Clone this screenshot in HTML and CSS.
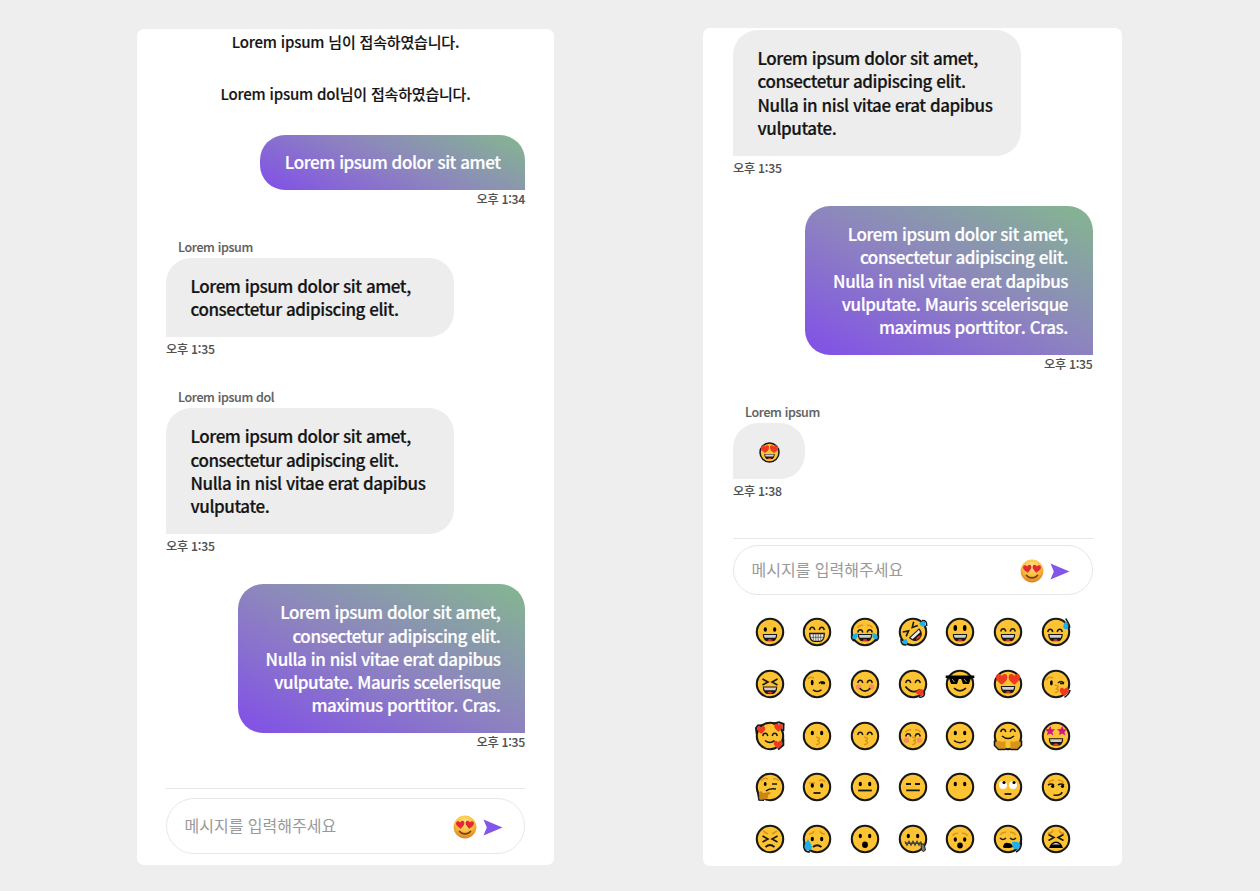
FILE: index.html
```html
<!DOCTYPE html>
<html lang="ko">
<head>
<meta charset="utf-8">
<title>Chat</title>
<link rel="stylesheet" href="styles.css">
</head>
<body>
<svg class="defs" aria-hidden="true">
  <defs>
    <radialGradient id="gloss" cx=".5" cy=".3" r=".75"><stop offset="0" stop-color="#ffe680"/><stop offset=".55" stop-color="#f9bd3d"/><stop offset="1" stop-color="#d9741c"/></radialGradient>
  </defs>
  <symbol id="face" viewBox="-16 -16 32 32"><circle r="13.2" fill="#fdc332" stroke="#181818" stroke-width="2.1"/></symbol>
  <symbol id="heart" viewBox="-5 -5 10 10"><path d="M0 4.6C-3 2.4-4.8.6-4.8-1.6-4.8-4.9-1.4-5.1 0-2.6 1.4-5.1 4.8-4.9 4.8-1.6 4.8.6 3 2.4 0 4.6Z" fill="#f03a20"/></symbol>
  <symbol id="grin" viewBox="-7.5 -4 15 8"><path d="M-7.3-3.5H7.3C7.3 0 5.5 3.9 2.5 3.9H-2.5C-5.5 3.9-7.3 0-7.3-3.5Z" fill="#181818"/><path d="M-6.2-2.6H6.2L5.3.2H-5.3Z" fill="#cfcfcf"/><path d="M-2.8 3C-1.5 1.2 1.5 1.2 2.8 3 1.5 3.5-1.5 3.5-2.8 3Z" fill="#ee3b23"/></symbol>
  <symbol id="arcs" viewBox="-9 -3 18 6"><path d="M-7.3 2C-6.5-1.7-3-1.7-2.2 2M2.2 2C3-1.7 6.5-1.7 7.3 2" fill="none" stroke="#181818" stroke-width="1.5"/></symbol>
  <symbol id="eyes" viewBox="-7 -3 14 6"><ellipse cx="-4.7" rx="1.6" ry="2.3"/><ellipse cx="4.7" rx="1.6" ry="2.3"/></symbol>
  <symbol id="brows" viewBox="-9 -3 18 6"><path d="M-7.5 1.8C-6-.5-4-1-2-.6M2-.6C4-1 6-.5 7.5 1.8" fill="none" stroke="#d9961c" stroke-width="1.6"/></symbol>
  <symbol id="kiss" viewBox="-3 -5 6 10"><path d="M-1.5-3.7C3-4 2.8-.5-.5-.3 3-.2 2.8 3.8-1.5 3.5" fill="none" stroke="#d9961c" stroke-width="1.5"/></symbol>
  <symbol id="blush" viewBox="-12 -3 24 6"><g fill="#f79060"><circle cx="-6.5" r="2.7"/><circle cx="6.5" r="2.7"/></g></symbol>
  <symbol id="squeeze" viewBox="-9 -4 18 8"><path d="M-7.5-3-2 0-7.5 3M7.5-3 2 0 7.5 3" fill="none" stroke="#181818" stroke-width="1.6"/></symbol>
  <symbol id="drop" viewBox="-4 -6 8 12"><path d="M0-6C1-3 4-1 4 2A4 4 0 0 1-4 2C-4-1-1-3 0-6Z" fill="#18b2ee"/></symbol>
  <symbol id="love" viewBox="-16 -16 32 32"><use href="#face" x="-16" y="-16" width="32" height="32"/><use href="#heart" x="-12.3" y="-10.8" width="12" height="12"/><use href="#heart" x=".3" y="-10.8" width="12" height="12"/><use href="#grin" x="-7.5" y="1.5" width="15" height="8"/></symbol>
  <symbol id="glossy" viewBox="-12 -12 24 24"><circle r="11.4" fill="url(#gloss)"/><g fill="#e52735"><path transform="translate(-4.6 -2.3) rotate(-6)" d="M0 4C-2.4 2-4.2.7-4.2-1.4-4.2-4.2-1.3-4.4 0-2.2 1.3-4.4 4.2-4.2 4.2-1.4 4.2.7 2.4 2 0 4Z"/><path transform="translate(4.6 -2.3) rotate(6)" d="M0 4C-2.4 2-4.2.7-4.2-1.4-4.2-4.2-1.3-4.4 0-2.2 1.3-4.4 4.2-4.2 4.2-1.4 4.2.7 2.4 2 0 4Z"/></g><path d="M-5.6 4.3C-3 7.7 3 7.7 5.6 4.3" fill="none" stroke="#774014" stroke-width="1.6" stroke-linecap="round"/></symbol>
  <symbol id="send" viewBox="0 0 20 17"><path d="M.5.5 19.5 8.5.5 16.5 3.8 8.5Z" fill="#8256e6"/></symbol>
</svg>

<main class="stage">
  <section class="panel panel-chat">
    <p class="notice">Lorem ipsum 님이 접속하였습니다.</p>
    <p class="notice notice-second">Lorem ipsum dol님이 접속하였습니다.</p>
    <article class="message mine first">
      <div class="bubble">Lorem ipsum dolor sit amet</div>
      <time>오후 1:34</time>
    </article>
    <article class="message after-mine">
      <h2>Lorem ipsum</h2>
      <div class="bubble wide">Lorem ipsum dolor sit amet,<br>consectetur adipiscing elit.</div>
      <time>오후 1:35</time>
    </article>
    <article class="message">
      <h2>Lorem ipsum dol</h2>
      <div class="bubble wide tall">Lorem ipsum dolor sit amet,<br>consectetur adipiscing elit.<br>Nulla in nisl vitae erat dapibus<br>vulputate.</div>
      <time>오후 1:35</time>
    </article>
    <article class="message mine">
      <div class="bubble wide">Lorem ipsum dolor sit amet,<br>consectetur adipiscing elit.<br>Nulla in nisl vitae erat dapibus<br>vulputate. Mauris scelerisque<br>maximus porttitor. Cras.</div>
      <time>오후 1:35</time>
    </article>
    <footer class="composer">
      <div class="field"><span class="placeholder">메시지를 입력해주세요</span><svg class="emoji-button"><use href="#glossy"/></svg><svg class="send-button"><use href="#send"/></svg></div>
    </footer>
  </section>

  <section class="panel panel-emoji">
    <article class="message continued">
      <div class="bubble wide tall">Lorem ipsum dolor sit amet,<br>consectetur adipiscing elit.<br>Nulla in nisl vitae erat dapibus<br>vulputate.</div>
      <time>오후 1:35</time>
    </article>
    <article class="message mine">
      <div class="bubble wide">Lorem ipsum dolor sit amet,<br>consectetur adipiscing elit.<br>Nulla in nisl vitae erat dapibus<br>vulputate. Mauris scelerisque<br>maximus porttitor. Cras.</div>
      <time>오후 1:35</time>
    </article>
    <article class="message after-mine">
      <h2>Lorem ipsum</h2>
      <div class="bubble emoji-bubble"><svg class="inline-emoji"><use href="#love"/></svg></div>
      <time>오후 1:38</time>
    </article>
    <footer class="composer">
      <div class="field"><span class="placeholder">메시지를 입력해주세요</span><svg class="emoji-button"><use href="#glossy"/></svg><svg class="send-button"><use href="#send"/></svg></div>
    </footer>
    <div class="emoji-grid">
      <svg viewBox="-16 -16 32 32"><use href="#face" x="-16" y="-16" width="32" height="32"/><use href="#eyes" x="-7" y="-5.5" width="14" height="6"/><use href="#grin" x="-7.5" y="1.5" width="15" height="8"/></svg>
      <svg viewBox="-16 -16 32 32"><use href="#face" x="-16" y="-16" width="32" height="32"/><use href="#arcs" x="-9" y="-7" width="18" height="6"/><path d="M-7.3 1.5H7.3C7.3 6 5.5 9.3 2.5 9.3H-2.5C-5.5 9.3-7.3 6-7.3 1.5Z" fill="#eee" stroke="#181818" stroke-width="1.3"/><path d="M-6.5 5.3H6.5M-3.7 2V8.5M-1.2 2V9M1.2 2V9M3.7 2V8.5" stroke="#444" stroke-width=".7"/></svg>
      <svg viewBox="-16 -16 32 32"><use href="#face" x="-16" y="-16" width="32" height="32"/><use href="#brows" x="-9" y="-9" width="18" height="6"/><use href="#arcs" x="-9" y="-4.5" width="18" height="6"/><use href="#grin" x="-7.5" y="1.5" width="15" height="8"/><path d="M-7.5 1C-7 5-8 7-11 7-14.5 7-14 2-7.5 1ZM7.5 1C7 5 8 7 11 7 14.5 7 14 2 7.5 1Z" fill="#18b2ee"/><path d="M-13.3 3Q-14.3 8-10.5 9M13.3 3Q14.3 8 10.5 9" fill="none" stroke="#181818" stroke-width="1.6"/></svg>
      <svg viewBox="-16 -16 32 32"><use href="#face" x="-16" y="-16" width="32" height="32"/><g transform="rotate(-43)"><path d="M-7.5-7-2.5-3.8-8-1.5M7.5-7 2.5-3.8 8-1.5" fill="none" stroke="#181818" stroke-width="1.6"/><path d="M-7 1.5H7C7 6 5 9.5 0 9.5-5 9.5-7 6-7 1.5Z" fill="#181818"/><path d="M-5.8 2.5H5.8L5 5H-5Z" fill="#eee"/><path d="M-3.5 8Q0 5 3.5 8 0 9.5-3.5 8Z" fill="#ef3b21"/></g><path d="M6-8.5Q9-11.5 12-10 13.5-7 11-5.3 8-5 6-8.5ZM-6.5 7Q-4.5 11-7 12.7-10.5 13.5-11 11-10.5 7.5-6.5 7Z" fill="#18b2ee"/><path d="M9-11.5Q14.3-12 13.7-6M-12 7Q-12.5 13.5-6.5 13" fill="none" stroke="#181818" stroke-width="1.5"/></svg>
      <svg viewBox="-16 -16 32 32"><use href="#face" x="-16" y="-16" width="32" height="32"/><ellipse cx="-4.7" cy="-4" rx="1.8" ry="3"/><ellipse cx="4.7" cy="-4" rx="1.8" ry="3"/><use href="#grin" x="-7.5" y="1.5" width="15" height="8"/></svg>
      <svg viewBox="-16 -16 32 32"><use href="#face" x="-16" y="-16" width="32" height="32"/><use href="#arcs" x="-9" y="-5.5" width="18" height="6"/><use href="#grin" x="-7.5" y="1.5" width="15" height="8"/></svg>
      <svg viewBox="-16 -16 32 32"><use href="#face" x="-16" y="-16" width="32" height="32"/><use href="#arcs" x="-10" y="-5" width="18" height="6"/><use href="#grin" x="-8" y="1.5" width="15" height="8"/><path d="M9.5-11.5C10-9 12.6-7.5 12.4-5 12.2-2 7.2-2 7.2-5.2 7.2-7.5 9-9 9.5-11.5Z" fill="#18b2ee"/><path d="M9.8-13.5C11-10 13.8-9 13.6-4" fill="none" stroke="#181818" stroke-width="1.6"/></svg>

      <svg viewBox="-16 -16 32 32"><use href="#face" x="-16" y="-16" width="32" height="32"/><use href="#squeeze" x="-9" y="-6" width="18" height="8"/><use href="#grin" x="-7.5" y="2" width="15" height="8"/></svg>
      <svg viewBox="-16 -16 32 32"><use href="#face" x="-16" y="-16" width="32" height="32"/><path d="M-9-5Q-7-8-3-6" fill="none" stroke="#d9961c" stroke-width="1.5"/><ellipse cx="-4.8" cy="-1.5" rx="1.4" ry="2.7"/><path d="M2-.5Q4.5-3.5 8-1M4-.5H8M-4 5.8Q0 9 4.5 5.8" fill="none" stroke="#181818" stroke-width="1.5"/></svg>
      <svg viewBox="-16 -16 32 32"><use href="#face" x="-16" y="-16" width="32" height="32"/><use href="#blush" x="-12" y="0" width="24" height="6"/><use href="#arcs" x="-9" y="-6" width="18" height="6"/><path d="M-5.3 4.2Q0 10 5.3 4.2" fill="none" stroke="#181818" stroke-width="1.6"/></svg>
      <svg viewBox="-16 -16 32 32"><use href="#face" x="-16" y="-16" width="32" height="32"/><use href="#arcs" x="-9" y="-6" width="18" height="6"/><path d="M-7.5 2.5Q-1 11 7 5.5" fill="none" stroke="#181818" stroke-width="1.8"/><path d="M2.5 8Q8 3 10 6 12 12 8 12 6 11 2.5 9Z" fill="#ee3b23"/><path d="M6 13Q12 14 11.5 8" fill="none" stroke="#181818" stroke-width="1.5"/></svg>
      <svg viewBox="-16 -16 32 32"><use href="#face" x="-16" y="-16" width="32" height="32"/><path d="M-14.3-8.5H14.3V-6L10.8-5.5 9 0H3L1.2-5H-1.2L-3 0H-9L-10.8-5.5-14.3-6Z"/><path d="M-8-5-5.5-2M4-5 6.5-2" stroke="#999"/><path d="M-6 4.2Q0 9.5 6 4.2" fill="none" stroke="#181818" stroke-width="1.7"/></svg>
      <svg viewBox="-16 -16 32 32"><use href="#love" x="-16" y="-16" width="32" height="32"/></svg>
      <svg viewBox="-16 -16 32 32"><use href="#face" x="-16" y="-16" width="32" height="32"/><path d="M-10-4Q-7-8-3-6" fill="none" stroke="#d9961c" stroke-width="1.5"/><ellipse cx="-4.6" cy="-1.2" rx="1.4" ry="2.6"/><path d="M2-1Q5-4 8-1M4-.5H8" fill="none" stroke="#181818" stroke-width="1.5"/><use href="#kiss" x="-2.8" y="0" width="6" height="10"/><use href="#heart" x="3.3" y="3" width="10" height="9.5"/><path d="M14 6Q13.5 10 8.5 13.3" fill="none" stroke="#181818" stroke-width="1.6"/></svg>

      <svg viewBox="-16 -16 32 32"><use href="#face" x="-16" y="-16" width="32" height="32"/><path d="M-13.3-2-14-8-12-10.5-8-10.8M3-12.3 9-13.7 13.6-12 13.3-5M13.3 2.5V9L8 13.5" fill="none" stroke="#181818" stroke-width="2"/><use href="#heart" x="-13" y="-10.3" width="8.5" height="8.5"/><use href="#heart" x="4" y="-13" width="9" height="9"/><use href="#heart" x="3.5" y="4" width="9" height="9"/><use href="#arcs" x="-9" y="-5" width="18" height="6"/><path d="M-5 4.5Q0 8.5 4.5 4.5" fill="none" stroke="#181818" stroke-width="1.6"/></svg>
      <svg viewBox="-16 -16 32 32"><use href="#face" x="-16" y="-16" width="32" height="32"/><use href="#eyes" x="-7" y="-6" width="14" height="6"/><use href="#kiss" x="-2.5" y="0" width="6" height="10"/></svg>
      <svg viewBox="-16 -16 32 32"><use href="#face" x="-16" y="-16" width="32" height="32"/><use href="#arcs" x="-9" y="-6" width="18" height="6"/><use href="#kiss" x="-2.5" y="0" width="6" height="10"/></svg>
      <svg viewBox="-16 -16 32 32"><use href="#face" x="-16" y="-16" width="32" height="32"/><use href="#brows" x="-9" y="-8.5" width="18" height="6"/><use href="#arcs" x="-9" y="-4.5" width="18" height="6"/><use href="#blush" x="-12" y="1.2" width="24" height="6"/><use href="#kiss" x="-2.5" y="0" width="6" height="10"/></svg>
      <svg viewBox="-16 -16 32 32"><use href="#face" x="-16" y="-16" width="32" height="32"/><use href="#eyes" x="-7" y="-6" width="14" height="6"/><path d="M-6 4.7Q0 8.7 6 4.7" fill="none" stroke="#181818" stroke-width="1.6"/></svg>
      <svg viewBox="-16 -16 32 32"><use href="#face" x="-16" y="-16" width="32" height="32"/><use href="#arcs" x="-9" y="-9" width="18" height="6"/><path d="M-6 0Q0 5 6 0" fill="none" stroke="#181818" stroke-width="1.6"/><path d="M-13 6Q-9 4-6 6L-2.5 5V13H-9L-13 9.5ZM13 6Q9 4 6 6L2.5 5V13H9L13 9.5Z" fill="#d99518"/><path d="M-13.5 4.5V9.5L-9.5 13.5H-3M13.5 4.5V9.5L9.5 13.5H3" fill="none" stroke="#181818" stroke-width="1.6"/></svg>
      <svg viewBox="-16 -16 32 32"><use href="#face" x="-16" y="-16" width="32" height="32"/><g fill="#d4148b"><path id="star" d="M-5.7-10-4.5-6.8-1-6.7-3.6-4.1-2.7-.6-6-2.4-9-.7-8.3-4.2-11-6.7-7.4-7Z"/><use href="#star" x="12"/></g><use href="#grin" x="-7.5" y="1.8" width="15" height="8"/></svg>

      <svg viewBox="-16 -16 32 32"><use href="#face" x="-16" y="-16" width="32" height="32"/><path d="M-9-6Q-6-10-2-8M3-8Q7-9 9-6" fill="none" stroke="#d9961c" stroke-width="1.5"/><ellipse cx="-4.8" cy="-3" rx="1.4" ry="2"/><path d="M2-3H7M-4 4Q-1 1 6 2" fill="none" stroke="#181818" stroke-width="1.7"/><path d="M-10 12.5-11.5 6-9 4-7 6-1 5Q3 6-2 8-1 12-6 12.5Z" fill="#cb8614"/><path d="M-12.5 4-11 13-6 13.2" fill="none" stroke="#181818" stroke-width="1.6"/></svg>
      <svg viewBox="-16 -16 32 32"><use href="#face" x="-16" y="-16" width="32" height="32"/><path d="M-8-4H-2M2-6Q5-9 8-5" fill="none" stroke="#d9961c" stroke-width="1.6"/><use href="#eyes" x="-7" y="-4.5" width="14" height="6"/><path d="M-3.5 6H3.5" stroke="#181818" stroke-width="1.8"/></svg>
      <svg viewBox="-16 -16 32 32"><use href="#face" x="-16" y="-16" width="32" height="32"/><use href="#eyes" x="-7" y="-6" width="14" height="6"/><path d="M-6.8 3.5H6.8" stroke="#181818" stroke-width="1.8"/></svg>
      <svg viewBox="-16 -16 32 32"><use href="#face" x="-16" y="-16" width="32" height="32"/><path d="M-7-3H-2M2-3H7M-6.8 3.3H6.8" stroke="#181818" stroke-width="1.8"/></svg>
      <svg viewBox="-16 -16 32 32"><use href="#face" x="-16" y="-16" width="32" height="32"/><use href="#eyes" x="-7" y="-6" width="14" height="6"/></svg>
      <svg viewBox="-16 -16 32 32"><use href="#face" x="-16" y="-16" width="32" height="32"/><circle cx="-5" cy="-2" r="4" fill="#fff"/><circle cx="5" cy="-2" r="4" fill="#fff"/><circle cx="-4" cy="-4.5" r="1.6"/><circle cx="6" cy="-4.5" r="1.6"/><path d="M-3.4 7H3.4" stroke="#181818" stroke-width="1.8"/></svg>
      <svg viewBox="-16 -16 32 32"><use href="#face" x="-16" y="-16" width="32" height="32"/><use href="#brows" x="-9" y="-9" width="18" height="6"/><path d="M-8-2Q-5-4-2-2M2-2Q5-4 8-2M-2.5 8Q5 9 6 5" fill="none" stroke="#181818" stroke-width="1.6"/><circle cx="-3.3" cy="-.7" r="1.6"/><circle cx="6.5" cy="-.7" r="1.6"/></svg>

      <svg viewBox="-16 -16 32 32"><use href="#face" x="-16" y="-16" width="32" height="32"/><path d="M-7-8-2-5M7-8 2-5" stroke="#d9961c" stroke-width="1.5"/><use href="#squeeze" x="-9" y="-4" width="18" height="8"/><path d="M-4.5 8Q0 4 4.5 8" fill="none" stroke="#181818" stroke-width="1.7"/></svg>
      <svg viewBox="-16 -16 32 32"><use href="#face" x="-16" y="-16" width="32" height="32"/><path d="M-8-5Q-4-5-3-8M3-8Q4-5 8-5" fill="none" stroke="#d9961c" stroke-width="1.5"/><use href="#eyes" x="-7" y="-3" width="14" height="6"/><path d="M-4 8Q0 4.5 4.5 8" fill="none" stroke="#181818" stroke-width="1.7"/><use href="#drop" x="-13" y="0" width="8" height="11.5"/><path d="M-13.2 4Q-14.5 13-7 13" fill="none" stroke="#181818" stroke-width="1.6"/></svg>
      <svg viewBox="-16 -16 32 32"><use href="#face" x="-16" y="-16" width="32" height="32"/><use href="#eyes" x="-7" y="-6" width="14" height="6"/><ellipse cy="5.8" rx="2.9" ry="3.3"/></svg>
      <svg viewBox="-16 -16 32 32"><use href="#face" x="-16" y="-16" width="32" height="32"/><use href="#eyes" x="-7" y="-6" width="14" height="6"/><path d="M-8 2.5-6 6-4 2.5-2 6 0 2.5 2 6 4 2.5 6 6 8 2.5M-8 4.2H9" fill="none" stroke="#444" stroke-width="1.5"/><path d="M8 5H11L12.5 11Q10.5 14 8.5 11Z" fill="#777" stroke="#222"/></svg>
      <svg viewBox="-16 -16 32 32"><use href="#face" x="-16" y="-16" width="32" height="32"/><use href="#brows" x="-9" y="-8" width="18" height="6"/><use href="#eyes" x="-7" y="-2.5" width="14" height="6"/><ellipse cy="6.6" rx="2.8" ry="3"/></svg>
      <svg viewBox="-16 -16 32 32"><use href="#face" x="-16" y="-16" width="32" height="32"/><use href="#brows" x="-9" y="-9" width="18" height="6"/><path d="M-8-1Q-5 2-2-1M2-1Q5 2 8-1" fill="none" stroke="#181818" stroke-width="1.5"/><path d="M-5 8Q-4 3 0 4 4 4 5 8L2 9H-4Z"/><path d="M4 3Q12.5 1.5 12 7 10 12.5 5 9Z" fill="#18b2ee"/><path d="M13.3 3Q14 10 8 13" fill="none" stroke="#181818" stroke-width="1.6"/></svg>
      <svg viewBox="-16 -16 32 32"><use href="#face" x="-16" y="-16" width="32" height="32"/><path d="M-8-6Q-4-5-3-9M3-9Q4-5 8-6" fill="none" stroke="#d9961c" stroke-width="1.5"/><use href="#squeeze" x="-9" y="-5.5" width="18" height="8"/><path d="M-7 9Q-5 2.5 0 2.5 5 2.5 7 9Z"/><path d="M-4 5.4Q0 2.4 4 5.4Z" fill="#e8e8e8"/></svg>
    </div>
  </section>
</main>
</body>
</html>
```
FILE: styles.css
```css
* { box-sizing: border-box; }
body { margin: 0; background: #eee; color: #151515; font-family: "Noto Sans CJK KR", sans-serif; font-weight: 500; overflow: hidden; }
.defs { position: absolute; width: 0; height: 0; }
.stage { display: flex; align-items: flex-start; gap: 149px; height: 891px; padding: 27.5px 0 0 136.5px; }
.panel { background: #fff; border-radius: 7px; overflow: hidden; display: flex; flex-direction: column; }
.panel-chat { width: 417.5px; height: 836px; margin-top: 1px; padding: 0 29px 0 29.5px; }
.panel-emoji { width: 419px; height: 838.5px; padding: 2px 29.5px 0 30px; }
.notice { margin: 0; height: 28px; line-height: 26px; font-size: 15px; letter-spacing: -.18px; text-align: center; -webkit-text-stroke: .15px; }
.notice-second { margin-top: 24px; }
.message { display: flex; flex-direction: column; align-items: flex-start; margin-top: 25px; }
.message.first { margin-top: 26px; }
.message.after-mine { margin-top: 27px; }
.message.continued { margin-top: 0; }
.mine { align-items: flex-end; }
.bubble { min-height: 55.3px; padding: 16px 24.5px; border-radius: 25px 25px 25px 0; background: #ededed; font-size: 17px; letter-spacing: -.43px; line-height: 23.3px; white-space: nowrap; -webkit-text-stroke: .2px; }
.bubble.wide { width: 287.5px; min-height: 79px; }
.bubble.wide.tall { min-height: 126px; padding-top: 16.5px; }
.mine .bubble { padding-top: 15.5px; border-radius: 25px 25px 0 25px; color: #fff; text-align: right; background: linear-gradient(26deg, #8254e4 5%, #8d84bf 50%, #85b294 95%); }
.mine .bubble.wide { min-height: 149.2px; padding-top: 16.5px; }
.message h2 { margin: 0 0 0 12px; height: 21px; line-height: 20px; font-size: 12.5px; letter-spacing: -.36px; font-weight: 500; color: #606060; -webkit-text-stroke: .15px; }
.message time { height: 25px; line-height: 25.5px; font-size: 12.2px; letter-spacing: -.25px; color: #505050; -webkit-text-stroke: .1px; }
.mine time { height: 20px; line-height: 19px; }
.bubble.emoji-bubble { display: flex; align-items: center; width: 72px; height: 56px; padding: 3px 0 0 24.5px; }
.inline-emoji { width: 23px; height: 23px; }
.composer { border-top: 1.5px solid #e6e6e6; }
.panel-chat .composer { margin-top: 35.5px; padding-top: 9px; }
.panel-emoji .composer { margin-top: 34.3px; padding-top: 6.5px; }
.field { display: flex; align-items: center; height: 55.5px; padding: 0 21.5px 0 17.5px; border: 1.5px solid #e6e6e6; border-radius: 28px; }
.panel-emoji .field { height: 50px; }
.placeholder { flex: 1; font-size: 16px; font-weight: 400; line-height: 24px; margin-top: -2px; color: #999; }
.emoji-button { width: 24px; height: 24px; margin: 1px 6px 0 0; }
.send-button { width: 20px; height: 17px; margin-top: 3px; }
.emoji-grid { display: grid; grid-template-columns: repeat(7, 32px); grid-auto-rows: 32px; column-gap: 15.7px; row-gap: 19.7px; margin: 20.8px 0 0 20.7px; }
.emoji-grid svg { width: 32px; height: 32px; }
```
